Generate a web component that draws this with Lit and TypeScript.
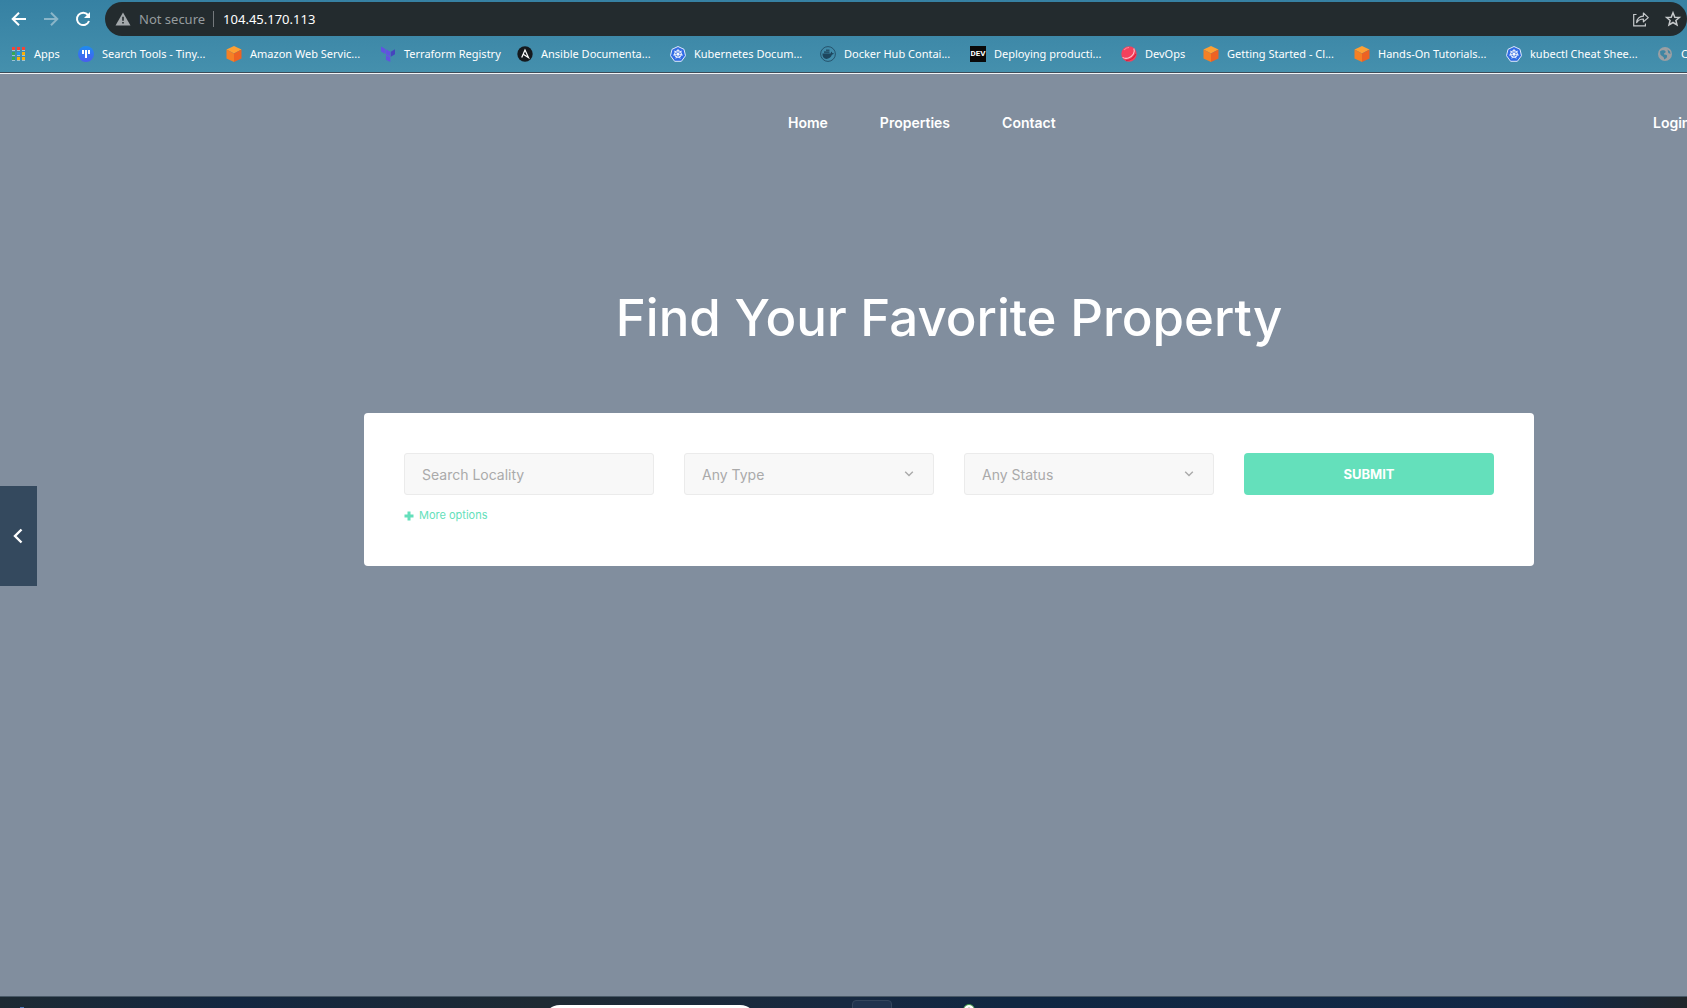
import { LitElement, html, css, svg } from "lit";
import { customElement } from "lit/decorators.js";

const wheelSpokes = [0, 1, 2, 3, 4, 5, 6].map((i) => {
  const a = (i * 2 * Math.PI) / 7 - Math.PI / 2;
  return svg`<line x1="8" y1="8" x2=${8 + 5 * Math.cos(a)} y2=${8 + 5 * Math.sin(a)} stroke="#fff" stroke-width="0.8"/>`;
});

const cube = svg`
  <path d="M8 0 15.5 3.5 8 7.5 0.5 3.5Z" fill="#ffa033"/>
  <path d="M0.5 3.5 8 7.5V16L0.5 12.5Z" fill="#f58025"/>
  <path d="M15.5 3.5 8 7.5V16L15.5 12.5Z" fill="#ee6222"/>`;

const wheel = svg`
  <path d="M8 0.5 14 3.3 15.5 9.7 11.4 15.3H4.6L0.5 9.7 2 3.3Z" fill="#326ce5" stroke="#dfe8fb" stroke-width="1"/>
  <circle cx="8" cy="8" r="3.4" fill="none" stroke="#fff" stroke-width="1"/>
  ${wheelSpokes}
  <circle cx="8" cy="8" r="1" fill="#fff"/>`;

const appColors = ["#f44336", "#f44336", "#f44336", "#34a853", "#2196f3", "#fbb008", "#34a853", "#fbb008", "#fbb008"];

const icons = {
  apps: appColors.map((c, i) => svg`
    <rect x=${2 + (i % 3) * 5} y=${1 + Math.floor(i / 3) * 5} width="3" height="3" fill=${c}/>
    <rect x=${2 + (i % 3) * 5} y=${4 + Math.floor(i / 3) * 5} width="3" height="1" fill="#9fc3d2"/>`),
  tiny: svg`
    <defs><linearGradient id="t" x1="0" y1="0" x2="0" y2="1"><stop offset="0" stop-color="#1d8cf0"/><stop offset="1" stop-color="#4a5cf0"/></linearGradient></defs>
    <circle cx="8" cy="8" r="8" fill="url(#t)"/>
    <path d="M4 4h2v4H4zM7 4h2v8H7zM10 4h2v4h-2z" fill="#fff"/>`,
  cube,
  terraform: svg`
    <path d="M1 0.5 5.4 3V8L1 5.5ZM5.9 3.3 10.3 5.8V10.8L5.9 8.3ZM5.9 9L10.3 11.3V16L5.9 13.7Z" fill="#6152e0"/>
    <path d="M10.8 5.8 15 3.3V8.3L10.8 10.8Z" fill="#4545bd"/>`,
  ansible: svg`
    <circle cx="8" cy="8" r="7.7" fill="#15191d"/>
    <path d="M4.7 11.6 8 4 11.5 11.6 6.6 8.4" fill="none" stroke="#fff" stroke-width="1.2"/>`,
  wheel,
  docker: svg`
    <circle cx="8" cy="8" r="7.4" fill="none" stroke="#25536c" stroke-width="1"/>
    <path d="M2.4 7.6H10.6C11 6.5 11 6 11.3 5.5 12 6 12.2 6.5 12.2 7 13 7 13.5 7.2 14 7.5 13.5 8.3 12.8 8.6 12 8.6 11 11.5 8.9 13 6.4 13 4 13 2.3 11 2.4 7.6Z" fill="#1d465e"/>
    <path d="M4 5.3H9.5V7.2H4ZM6 3.5H9.5V5H6Z" fill="#25536c"/>`,
  dev: svg`<rect width="16" height="16" fill="#0a0a0a"/>`,
  devops: svg`
    <circle cx="8" cy="8" r="7.7" fill="#f5405c"/>
    <path d="M1.6 11.4C5 13.6 10 12 12.4 8 13.6 6 13.6 4 12.8 2.4" fill="none" stroke="#ffc3cb" stroke-width="1.1"/>
    <path d="M3 4Q5 1.5 8 1.5" fill="none" stroke="#ff8b9b" stroke-width="1.2"/>
    <path d="M5 14.6Q12 14 14.8 8" fill="none" stroke="#d9213f" stroke-width="1.2"/>`,
  globe: svg`
    <circle cx="8" cy="8" r="7" fill="#9b9fa3"/>
    <path d="M3 5.5C5 3.6 8 4 8.6 5.6 9 7.2 6.5 7 7 8.6 9 8.4 10.6 9.2 10 11 9.4 12.4 8.4 13 7 13.5 7.6 11 5 10.6 3.4 8.6Z" fill="#3f85a2"/>
    <path d="M10.5 3.6 13 5.6 13.5 8 11.4 7Z" fill="#3f85a2"/>`,
};

const bookmarks: { icon: keyof typeof icons; text: string; mark?: string }[] = [
  { icon: "apps", text: "Apps" },
  { icon: "tiny", text: "Search Tools - Tiny..." },
  { icon: "cube", text: "Amazon Web Servic..." },
  { icon: "terraform", text: "Terraform Registry" },
  { icon: "ansible", text: "Ansible Documenta..." },
  { icon: "wheel", text: "Kubernetes Docum..." },
  { icon: "docker", text: "Docker Hub Contai..." },
  { icon: "dev", text: "Deploying producti...", mark: "DEV" },
  { icon: "devops", text: "DevOps" },
  { icon: "cube", text: "Getting Started - Cl..." },
  { icon: "cube", text: "Hands-On Tutorials..." },
  { icon: "wheel", text: "kubectl Cheat Shee..." },
  { icon: "globe", text: "C" },
];

@customElement("browser-toolbar")
export class BrowserToolbar extends LitElement {
  static styles = css`
    :host {
      display: block;
      overflow: hidden;
      font-family: "Noto Sans", "Open Sans", sans-serif;
      color: #fff;
      background: linear-gradient(#3681a3, #4590ad);
      border-bottom: 1px solid #f1f3f5;
    }
    .top { display: flex; align-items: center; padding-top: 2px; height: 34px; }
    .nav { display: flex; gap: 12px; padding: 0 12px 0 9px; }
    .nav button, .action {
      display: block; border: 0; padding: 0; background: none; width: 20px; height: 20px; color: #fff;
    }
    .nav button:disabled { color: #8ab5c8; }
    .address {
      flex: 1; display: flex; align-items: center; height: 34px; box-sizing: border-box;
      padding: 0 4px 0 10px; border-radius: 17px; background: #232b2e; font-size: 13px;
    }
    .warn { width: 16px; height: 16px; margin-right: 8px; }
    .state { color: #969b9e; padding-right: 8px; border-right: 1px solid #74797c; line-height: 16px; white-space: nowrap; }
    .url {
      flex: 1; min-width: 0; border: 0; outline: 0; background: none; color: #fff;
      font: inherit; padding: 0 0 0 9px; height: 24px;
    }
    .action { color: #c6c9cb; margin-left: 12px; }
    .marks {
      display: grid; height: 37px; align-items: center; padding-left: 10px;
      grid-template-columns: 68px 148px 154px 137px 153px 150px 150px 151px 82px 151px 152px 151px 1fr;
      border-bottom: 1px solid #3c4c58; box-sizing: border-box;
    }
    .mark {
      display: flex; align-items: center; gap: 8px; font-size: 11px; line-height: 16px;
      white-space: nowrap; color: #fff; text-decoration: none; min-width: 0;
    }
    .icon { display: grid; flex: none; width: 16px; height: 16px; place-items: center; }
    .icon svg, .icon span { grid-area: 1 / 1; }
    .icon span { font: 700 8px/16px "Roboto", sans-serif; }
    svg { display: block; }
  `;

  render() {
    return html`
      <div class="top">
        <div class="nav">
          <button aria-label="Back"><svg viewBox="0 0 20 20" fill="none" stroke="currentColor" stroke-width="2"><path d="M17 10H4M10 3.7 3.7 10 10 16.3"/></svg></button>
          <button aria-label="Forward" disabled><svg viewBox="0 0 20 20" fill="none" stroke="currentColor" stroke-width="2"><path d="M3 10H16M10 3.7 16.3 10 10 16.3"/></svg></button>
          <button aria-label="Reload"><svg viewBox="0 0 20 20" fill="none" stroke="currentColor" stroke-width="2"><path d="M15 6A6.2 6.2 0 1 0 16 12"/><path d="M17 3V9H11Z" fill="currentColor" stroke="none"/></svg></button>
        </div>
        <div class="address">
          <svg class="warn" viewBox="0 0 16 16"><path d="M8 1.5 15.5 14.5H0.5Z" fill="#a3a8ab"/><path d="M7.2 5.8h1.6v4H7.2zM7.2 11h1.6v1.6H7.2z" fill="#232b2e"/></svg>
          <span class="state">Not secure</span>
          <input class="url" aria-label="Address" value="104.45.170.113" />
          <button class="action" aria-label="Share"><svg viewBox="0 0 20 20" fill="none" stroke="currentColor" stroke-width="1.2"><path d="M5.5 5.5H2.7V16.8H14.4V14.5"/><path d="M5.6 13.6C6.2 9.4 8.6 7.4 12.4 7.2V4L17.3 8.6 12.4 12.8V10C9.6 10 7.4 11 5.6 13.6Z" stroke-linejoin="round"/></svg></button>
          <button class="action" aria-label="Bookmark"><svg viewBox="0 0 20 20" fill="none" stroke="currentColor" stroke-width="1.5"><path d="M10 3.8 11.8 8.2 16.4 8.5 12.9 11.5 14 16 10 13.5 6 16 7.1 11.5 3.6 8.5 8.2 8.2Z"/></svg></button>
        </div>
      </div>
      <nav class="marks">
        ${bookmarks.map((b) => html`
          <a class="mark" href="#">
            <span class="icon"><svg width="16" height="16" viewBox="0 0 16 16">${icons[b.icon]}</svg>${b.mark ? html`<span>${b.mark}</span>` : ""}</span>
            ${b.text}
          </a>`)}
      </nav>
    `;
  }
}

@customElement("property-page")
export class PropertyPage extends LitElement {
  static styles = css`
    :host {
      display: block; position: relative; overflow: hidden; background: #818e9e; color: #fff;
      font-family: "Inter", sans-serif;
    }
    .header {
      display: flex; align-items: center; height: 98px; padding-left: 788px;
      font-size: 14px; font-weight: 600; line-height: 20px;
    }
    .menu { display: flex; gap: 52px; }
    a { color: inherit; text-decoration: none; }
    .login { margin-left: auto; width: 34px; white-space: nowrap; }
    .hero { padding: 108px 153px 0 364px; }
    h1 { margin: 0 0 58px; font-size: 51px; line-height: 75px; font-weight: 500; text-align: center; white-space: nowrap; }
    .card {
      background: #fff; border-radius: 4px; padding: 40px 40px 42px;
    }
    .fields { display: grid; grid-template-columns: repeat(4, 1fr); gap: 30px; }
    .box { display: grid; align-items: center; min-width: 0; }
    .box > * { grid-area: 1 / 1; }
    .input, .submit {
      box-sizing: border-box; width: 100%; height: 42px; border-radius: 3px; margin: 0;
      font: 400 14px/20px "Inter", sans-serif;
    }
    .input {
      appearance: none; border: 1px solid #ebebeb; background: #f8f8f8; color: #aaa; padding: 0 17px; outline: 0;
    }
    select.input { padding-top: 2px; }
    .input::placeholder { color: #aaa; opacity: 1; }
    .chevron { justify-self: end; margin-right: 20px; pointer-events: none; }
    .submit { border: 0; background: #64e0bb; color: #fff; font-size: 13px; font-weight: 700; border-radius: 4px; }
    .more {
      display: flex; align-items: center; gap: 5px; margin-top: 12px; padding: 0; border: 0; background: none;
      color: #64dfbb; font: 400 11px/17px "Inter", sans-serif;
    }
    .prev {
      position: absolute; left: 0; top: 50%; margin-top: -49px; width: 37px; height: 100px;
      border: 0; padding: 0 2px 0 0; background: #34495e; display: grid; place-items: center;
    }
    svg { display: block; }
  `;

  private select(label: string) {
    return html`
      <div class="box">
        <select class="input" aria-label=${label}><option>${label}</option></select>
        <svg class="chevron" width="10" height="8" viewBox="0 0 10 8" fill="none" stroke="#aaa" stroke-width="1.4"><path d="M1.2 1.8 5 5.6 8.8 1.8"/></svg>
      </div>`;
  }

  render() {
    return html`
      <header class="header">
        <nav class="menu"><a href="#">Home</a><a href="#">Properties</a><a href="#">Contact</a></nav>
        <a class="login" href="#">Login</a>
      </header>
      <main class="hero">
        <h1>Find Your Favorite Property</h1>
        <form class="card" @submit=${(e: Event) => e.preventDefault()}>
          <div class="fields">
            <input class="input" type="text" placeholder="Search Locality" aria-label="Search Locality" />
            ${this.select("Any Type")} ${this.select("Any Status")}
            <button class="submit" type="submit">SUBMIT</button>
          </div>
          <button class="more" type="button">
            <svg width="10" height="10" viewBox="0 0 10 10" fill="#64dfbb"><path d="M3.5 0.5h3v3h3v3h-3v3h-3v-3h-3v-3h3z"/></svg>More options
          </button>
        </form>
      </main>
      <button class="prev" aria-label="Previous"><svg width="12" height="16" viewBox="0 0 12 16" fill="none" stroke="#fff" stroke-width="2.4"><path d="M9.5 1.5 3 8 9.5 14.5"/></svg></button>
    `;
  }
}

@customElement("desktop-taskbar")
export class DesktopTaskbar extends LitElement {
  static styles = css`
    :host {
      display: flex; align-items: flex-start; height: 11px; overflow: hidden; border-top: 1px solid #485866;
      background: linear-gradient(90deg, #1d2a33, #132741 14%, #1e2a33 32%, #172941 50%, #102742 60%, #122846 92%, #20262b);
    }
    .start { width: 4px; height: 4px; margin: 10px 0 0 20px; background: #4d78b8; }
    .search { width: 214px; height: 34px; margin: 8px 0 0 519px; border-radius: 17px; background: #fff; flex: none; }
    .app { width: 38px; height: 40px; margin: 3px 0 0 95px; border: 1px solid #34465d; border-radius: 4px; background: #20334e; flex: none; }
    .chat { width: 12px; height: 12px; margin: 7px 0 0 71px; flex: none; }
  `;

  render() {
    return html`
      <span class="start"></span><span class="search"></span><span class="app"></span>
      <svg class="chat" viewBox="0 0 12 12"><circle cx="6" cy="6" r="5.5" fill="#fff" stroke="#3f9b46"/><circle cx="6" cy="5" r="1.4" fill="#5a7f52"/></svg>
    `;
  }
}

@customElement("app-root")
export class AppRoot extends LitElement {
  static styles = css`
    :host { display: flex; flex-direction: column; min-height: 100vh; overflow: hidden; }
    .page { flex: 1; }
  `;

  render() {
    return html`
      <browser-toolbar></browser-toolbar>
      <property-page class="page"></property-page>
      <desktop-taskbar></desktop-taskbar>
    `;
  }
}
